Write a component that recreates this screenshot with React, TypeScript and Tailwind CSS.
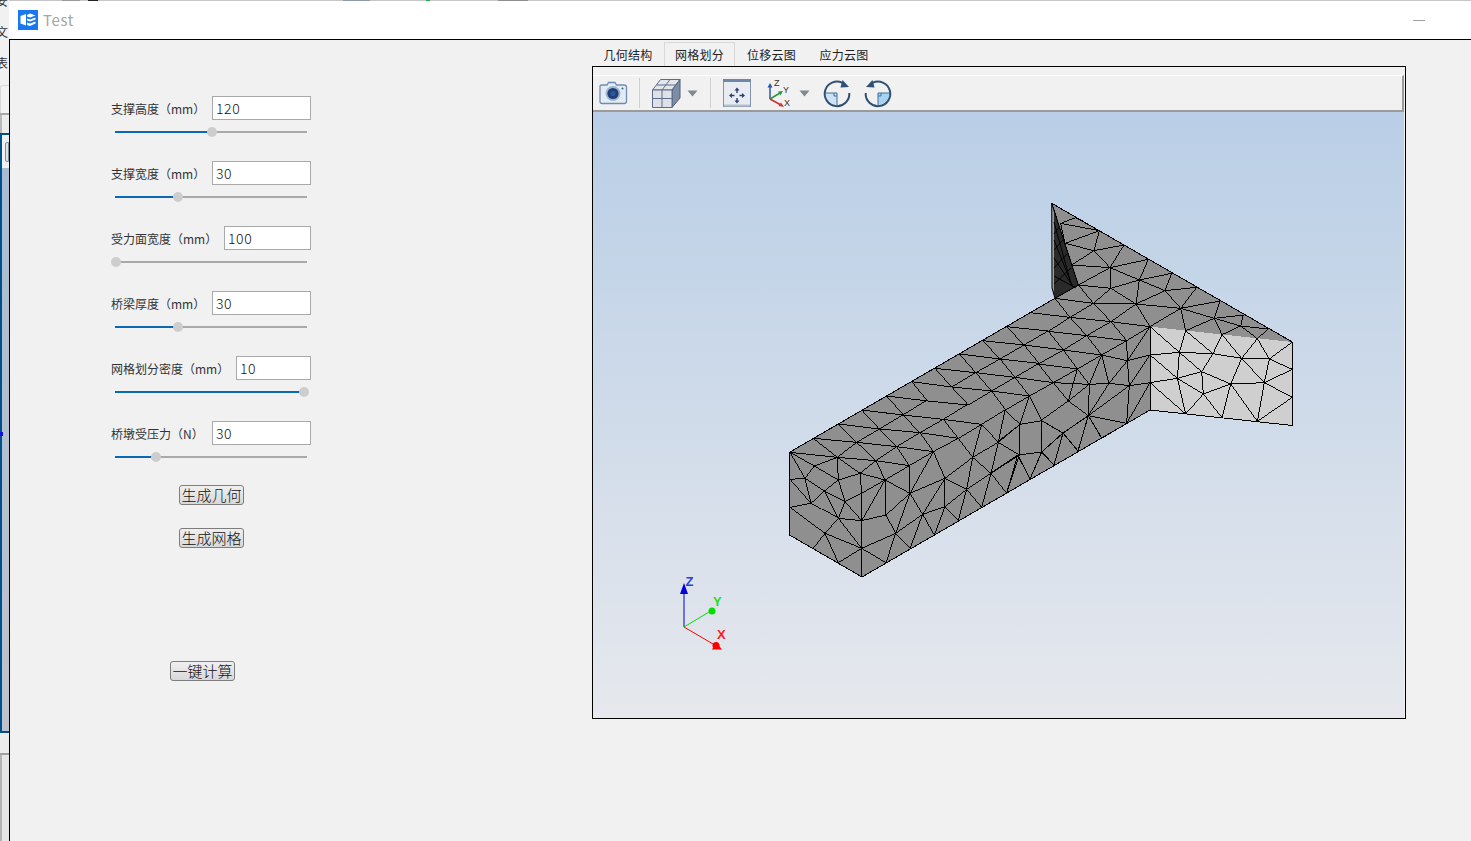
import React from "react";

const FONT = '"Noto Sans CJK SC","Noto Sans",sans-serif';

const toD = (s: string) =>
  s
    .split("|")
    .map((p) => p.trim())
    .filter(Boolean)
    .map((p) => "M" + p.replace(/\s+/g, "L"))
    .join("");

const params = [
  { label: "支撑高度（mm）", value: "120", inputW: "w-[99px]", pos: 97 },
  { label: "支撑宽度（mm）", value: "30", inputW: "w-[99px]", pos: 63 },
  { label: "受力面宽度（mm）", value: "100", inputW: "w-[87px]", pos: 1 },
  { label: "桥梁厚度（mm）", value: "30", inputW: "w-[99px]", pos: 63 },
  { label: "网格划分密度（mm）", value: "10", inputW: "w-[75px]", pos: 189 },
  { label: "桥墩受压力（N）", value: "30", inputW: "w-[99px]", pos: 41 },
];

function Slider({ pos }: { pos: number }) {
  return (
    <div className="relative mt-[7px] ml-[4px] flex h-[10px] w-[192px] items-center">
      <div className="h-[2px] w-full bg-[#a9a9a9]" />
      <div className="absolute left-0 top-[4px] h-[2px] bg-[#0b68b3]" style={{ width: pos }} />
      <div
        className="absolute top-0 h-[10px] w-[10px] rounded-full bg-[#cdcdcd]"
        style={{ left: pos - 5 }}
      />
    </div>
  );
}

function Param({ label, value, inputW, pos }: (typeof params)[number]) {
  return (
    <div className="mb-[24px] w-[200px]">
      <div className="flex h-[24px] items-center justify-between">
        <span className="whitespace-nowrap pt-[2px] text-[12px] text-[#333333]">{label}</span>
        <input
          readOnly
          value={value}
          className={`${inputW} h-[24px] border border-[#a9a9a9] bg-white pl-[3px] text-[14px] font-light tracking-[0.6px] text-[#111111] outline-none`}
        />
      </div>
      <Slider pos={pos} />
    </div>
  );
}

function OldButton({ children, className }: { children: string; className: string }) {
  return (
    <button
      className={`${className} flex h-[20px] w-[65px] items-center justify-center whitespace-nowrap rounded-[3px] border border-[#7d7d7d] bg-gradient-to-b from-[#f0f0f0] to-[#d8d8d8] pb-[2px] text-[15px] font-light leading-none text-[#111111]`}
    >
      {children}
    </button>
  );
}

function Camera() {
  return (
    <svg width="30" height="30" viewBox="0 0 30 30" className="ml-[5px] shrink-0">
      <path d="M2 8.5Q2 7 4 7H9L10.5 4.5H17L18.5 7H26Q28.5 7 28.5 9V23.5Q28.5 25.5 26 25.5H4Q2 25.5 2 23.5Z" fill="#e3ebf5" stroke="#6f8db0" strokeWidth="1.3" />
      <circle cx="15" cy="15.5" r="7.5" fill="#9db6d2" />
      <circle cx="15" cy="15.5" r="5.6" fill="#1f3f78" />
      <circle cx="15" cy="15.5" r="2.6" fill="#2f5796" />
      <circle cx="24.5" cy="10.5" r="1" fill="#3c5f8c" />
    </svg>
  );
}

function Cube() {
  return (
    <svg width="30" height="30" viewBox="0 0 30 30" className="ml-[11px] shrink-0">
      <path d="M1.5 12L9.5 1.5H29L21 12Z" fill="#e2e5ea" stroke="#5d6d88" />
      <path d="M21 12L29 1.5V20L21 29.5Z" fill="#7e8ca6" stroke="#4f5f7a" />
      <path d="M1.5 12H21V29.5H1.5Z" fill="#dee2e8" stroke="#5d6d88" />
      <path d="M11 12V29.5M1.5 20.5H21M5.5 7H25M11 12L19 1.5" fill="none" stroke="#5d6d88" />
    </svg>
  );
}

function Caret({ className }: { className: string }) {
  return (
    <svg width="11" height="7" viewBox="0 0 11 7" className={`${className} shrink-0`}>
      <path d="M0.5 0.5H10.5L5.5 6.5Z" fill="#808890" />
    </svg>
  );
}

function FitIcon() {
  return (
    <svg width="30" height="30" viewBox="0 0 30 30" className="ml-[11px] shrink-0">
      <rect x="1.5" y="1.5" width="27" height="27" fill="#e8ecf2" stroke="#8395ae" />
      <rect x="1" y="1" width="28" height="3" fill="#7088a8" />
      <rect x="2" y="26.5" width="26" height="2" fill="#b4bfcd" />
      <path
        d="M15 9.5L17.5 12.5H15.7V15H14.3V12.5H12.5Z M15 25.5L12.5 22.5H14.3V20H15.7V22.5H17.5Z M7 17.5L10 15V16.8H12.5V18.2H10V20Z M23 17.5L20 20V18.2H17.5V16.8H20V15Z"
        fill="#27406e"
      />
    </svg>
  );
}

function AxesIcon() {
  return (
    <svg width="30" height="30" viewBox="0 0 30 30" className="ml-[13px] shrink-0">
      <path d="M5 21V8" stroke="#2459a8" strokeWidth="1.5" />
      <path d="M5 5L2.5 9.5H7.5Z" fill="#2459a8" />
      <path d="M5 21L15 15" stroke="#2a9640" strokeWidth="1.5" />
      <path d="M18 13L13 13.5L15.5 17.5Z" fill="#2a9640" />
      <path d="M5 21L16 27" stroke="#cc2f2f" strokeWidth="1.5" />
      <path d="M19 29L16 24.5L13.5 28Z" fill="#dd3333" />
      <text x="9" y="8" fontSize="9" fill="#333333" fontFamily="Liberation Sans">Z</text>
      <text x="18" y="15" fontSize="9" fill="#333333" fontFamily="Liberation Sans">Y</text>
      <text x="19" y="28" fontSize="9" fill="#333333" fontFamily="Liberation Sans">X</text>
    </svg>
  );
}

function RotateIcon({ flip, fill, className }: { flip?: boolean; fill: string; className: string }) {
  return (
    <svg width="30" height="30" viewBox="0 0 30 30" className={`${className} shrink-0`}>
      <g transform={flip ? "translate(30 0) scale(-1 1)" : undefined}>
        <path d="M15 15H3.2A11.8 11.8 0 0 0 15 26.8Z" fill={fill} />
        <path d="M20.5 4.8A12.3 12.3 0 1 0 27.3 15" fill="none" stroke="#2f4f73" strokeWidth="2" />
        <path d="M27 9L18.5 9.5L20.5 2Z" fill="#2f4f73" />
        <path d="M3 15H15V27M12 15V18H15" fill="none" stroke="#3f6f9f" strokeWidth="1" />
      </g>
    </svg>
  );
}

/* mesh edges are stored in the pixel units of the source crops */
const Z4 = toD(`
30,157 172,172 288,182 388,197|100,115 230,127 350,140 460,155|175,72 298,87 420,98 535,115|245,30 368,45 490,58 605,73|
100,115 172,172|175,72 230,127 288,182|245,30 298,87 350,140 388,197|368,45 420,98 460,155|490,58 535,115|
172,172 230,127 298,87 368,45 442,0|288,182 350,140 420,98 490,58 560,15|388,197 460,155 535,115 605,73 675,30|
30,157 103,198 172,172|30,157 75,235|103,198 75,235 30,238|103,198 175,240 172,172|75,235 133,273|75,235 93,310 30,238|175,240 133,273|175,240 240,220 315,240|175,240 195,305|
133,273 195,305|133,273 175,355|133,273 93,310 30,322|93,310 175,355|30,322 135,400|175,355 135,400|175,355 245,362|175,355 195,305 245,362|195,305 245,280|245,280 245,362|240,220 245,280 315,240|315,240 245,362|
245,362 245,445|175,355 245,445|135,400 245,445|135,400 100,445|135,400 175,488|245,445 175,488|245,445 245,528|245,445 318,488|245,445 347,400|347,400 318,488|347,400 390,445|
245,362 318,345|315,240 318,345|318,345 390,280|318,345 347,400|390,280 428,343|390,280 347,400|390,280 495,235|388,197 390,280|315,240 390,280|315,240 388,197|240,220 288,182|172,172 240,220|288,182 315,240|
390,280 460,155 495,235|495,235 495,320|495,320 428,343 495,235|428,343 463,405|428,343 347,400|428,343 390,445|495,320 535,360|495,320 560,268|495,235 560,268|495,235 578,172|
560,268 535,360|560,268 578,172|560,268 605,322|605,322 633,220|633,220 578,172|633,220 680,280|633,220 655,127|578,172 535,115|578,172 605,73|578,172 655,127|655,127 605,73|655,127 675,30|655,127 720,73|675,30 720,73|655,127 718,165|720,73 718,165|718,165 633,220|718,165 680,280|560,268 633,220|495,320 463,405
`);

/* only the edges that lie above and to the right of the first crop */
const Z8 = toD(`
5,270 130,285|80,228 203,243|155,185 275,201|225,145 347,158|298,102 420,117|368,62 492,75|440,20 564,33|
80,228 130,285|155,185 203,243|225,145 275,201|298,102 347,158|368,62 420,117|440,20 492,75|
275,201 347,158 420,117 492,75 564,33|325,255 395,213 465,172 537,130|
275,201 325,255|347,158 395,213|420,117 465,172|492,75 537,130|
203,243 325,255|275,201 395,213|347,158 465,172|420,117 537,130|492,75 610,90|
395,213 437,270|465,172 508,228|395,213 508,228|465,172 580,188|
437,270 508,228 580,188|508,228 480,313|480,313 413,365|480,313 545,302
`);

const Z3 = toD(`
360,410 448,487 467,422 549,491 576,434 635,505 682,446 718,507 787,456|360,495 448,487 549,491 635,505 718,507 787,538|
360,495 442,565 448,487 515,545 549,491 635,505|515,545 602,582 635,505 703,578 718,507|703,578 787,538|602,582 703,578|360,578 442,565 515,545|
360,578 467,672|442,565 467,672|442,565 520,612 515,545|520,612 602,582|520,612 467,672|520,612 576,683|602,582 576,683|602,582 682,694|703,578 682,694|703,578 787,622|787,622 682,694|
92,100 137,83 208,122 92,100|92,100 105,160 208,122|208,122 192,182 105,160|282,165 192,182|192,182 240,233 125,225|192,182 125,225|105,160 125,225|240,233 282,165|240,233 355,208|240,233 328,270 355,208|328,270 425,250|328,270 405,302 425,250|405,302 500,292|
125,225 240,233|125,225 145,285 240,233|240,233 243,295 145,285|243,295 328,270|243,295 318,342|328,270 318,342 405,302|405,302 452,355 500,292|452,355 318,342|452,355 570,333|452,355 553,385 570,333|553,385 640,375|553,385 632,408 640,375|632,408 715,417|632,408 682,446 715,417|632,408 576,434|553,385 576,434|553,385 467,422|452,355 467,422|452,355 360,410|318,342 360,410|
75,325 190,340 318,342|145,285 190,340|243,295 190,340|190,340 243,395|318,342 243,395|75,325 120,382|190,340 120,382|120,382 243,395 360,410|120,382 0,368|
120,382 55,424|120,382 170,437|243,395 170,437|243,395 290,452|360,410 290,452|55,424 170,437 290,452|55,424 100,480|170,437 100,480|170,437 215,495|290,452 215,495|290,452 292,512|100,480 215,495 292,512 360,495|360,410 292,512|
100,480 142,537|25,522 142,537|215,495 142,537|215,495 178,583|215,495 237,580|292,512 237,580|292,512 298,587|298,587 360,495|298,587 360,578|237,580 298,587|178,583 237,580|142,537 178,583|142,537 70,578|142,537 115,633|70,578 115,633|25,522 70,578|70,578 178,583|178,583 115,633|178,583 175,677|237,580 175,677|298,587 175,677|298,587 290,700|175,677 290,700|360,578 290,700|115,633 175,677|115,633 35,690|175,677 215,745|290,700 215,745|0,620 35,690|
25,522 100,480
`);

const ZP = toD(`
1017.7,455 1030,479|1017.7,455 991,473|1017.7,455 1006.7,493|1041.7,420.7 1041.7,452|1041.7,452 1017.7,455|1041.7,452 1030,479|1041.7,452 1054,465|1063,433 1041.7,452|1063,433 1054,465|1063,433 1078,451|1041.7,420.7 1063,433|1088.3,415.7 1078,451|1088.3,415.7 1063,433|1088.3,415.7 1101.7,438
`);

const WEDGE = toD(`
1054,222 1070,280|1054,240 1072,285|1054,258 1074,288|1054,276 1076,288|1060,226 1054,234|1063,240 1054,250|1067,254 1054,268|1071,268 1054,284
`);

function Mesh() {
  return (
    <svg viewBox="593 112 811 606" className="block h-[606px] w-[811px]">
      <g shapeRendering="crispEdges">
        <polygon
          points="789.5,452.3 1055,298.3 1078.3,285 1051.7,203.3 1292.3,342 1150,326.7 1150,410 862,577 789.5,535"
          fill="#8f8f8f"
        />
        <polygon points="1150,326.7 1292.3,342 1292.3,425.5 1150,410" fill="#cfcfcf" />
        <g fill="none" stroke="#000000">
          <path transform="translate(780 400) scale(0.33333)" d={Z4} strokeWidth="3" />
          <path transform="translate(860 320) scale(0.33333)" d={Z8} strokeWidth="3" />
          <path transform="translate(1030 190) scale(0.33333)" d={Z3} strokeWidth="3" />
          <path d={ZP} strokeWidth="1" />
          <polygon
            points="789.5,452.3 1055,298.3 1078.3,285 1051.7,203.3 1292.3,342 1292.3,425.5 1150,410 862,577 789.5,535"
            strokeWidth="1"
          />
          <path d="M1150 326.7V410" strokeWidth="1" />
        </g>
      </g>
      <polygon points="1052,204 1078.3,285 1055,298.3 1052,288" fill="#2a2a2a" />
      <polygon points="1052,204 1054,212 1054,293 1052,288" fill="#9a9a9a" />
      <path d={WEDGE} fill="none" stroke="#000000" strokeWidth="1" />
      <path d="M1051.7 203.3L1052 288L1055 298.3L1078.3 285L1051.7 203.3" fill="none" stroke="#000000" strokeWidth="1" />
      <path d="M684 627V592" stroke="#0000e0" strokeWidth="1" />
      <path d="M684 583L680 594H688Z" fill="#0000e0" />
      <path d="M684 627L709 612" stroke="#00e000" strokeWidth="1" />
      <circle cx="712" cy="611" r="3.5" fill="#00e000" />
      <path d="M684 627L713 644" stroke="#ff0000" strokeWidth="1" />
      <circle cx="716" cy="645.5" r="3.5" fill="#ff0000" />
      <path d="M722 649.5L712 649.5L716 642Z" fill="#ff0000" />
      <text x="685.5" y="586" fontSize="13" fontWeight="700" fill="#2a3fe0" fontFamily="Liberation Sans">Z</text>
      <text x="713" y="606" fontSize="13" fontWeight="700" fill="#22e022" fontFamily="Liberation Sans">Y</text>
      <text x="717" y="639" fontSize="13" fontWeight="700" fill="#ff2020" fontFamily="Liberation Sans">X</text>
    </svg>
  );
}

function LeftStrip() {
  return (
    <div className="flex h-full w-[9px] shrink-0 flex-col overflow-hidden bg-[#f1f1f1]">
      <div className="flex h-[85px] flex-col gap-[13px] text-[12px] leading-[18px] text-[#333333]">
        <span className="-ml-[4px] -mt-[8px]">安</span>
        <span className="-ml-[4px]">文</span>
        <span className="-ml-[4px]">表</span>
      </div>
      <div className="h-[28px] rounded-tl-[3px] border-l border-t border-[#d8d8d8] bg-[#f3f3f3]" />
      <div className="h-[2px] bg-[#a8a8a8]" />
      <div className="h-[18px] border-l-2 border-[#b8b8b8] bg-[#ececec]" />
      <div className="relative flex h-[600px] flex-col border-y-2 border-l-2 border-[#00508f]">
        <div className="flex h-[33px] items-center bg-[#f1f1f1] pl-[3px]">
          <div className="h-[20px] w-[6px] rounded-l-[2px] border border-[#7e8ea0] bg-[#dfe3e8]" />
        </div>
        <div className="flex-1 bg-gradient-to-b from-[#a9bdd2] to-[#bdc3cc]" />
        <div className="absolute -left-[2px] top-[297px] h-[4px] w-[3px] bg-[#1010e0]" />
      </div>
      <div className="h-[20px] bg-[#ececec]" />
      <div className="h-[2px] bg-[#a0a0a0]" />
      <div className="flex-1 border-l-2 border-[#b4b4b4] bg-[#e6e6e6]" />
    </div>
  );
}

function TopBits() {
  return (
    <div className="flex h-[1px] shrink-0 bg-[#c6c6c6]">
      <div className="ml-[53px] w-[18px] bg-[#9a9a9a]" />
      <div className="ml-[8px] w-[10px] bg-[#222222]" />
      <div className="ml-[245px] w-[27px] bg-[#8f9aa8]" />
      <div className="ml-[56px] w-[4px] bg-[#2aa84a]" />
      <div className="ml-[68px] w-[30px] bg-[#8f8f8f]" />
    </div>
  );
}

export default function App() {
  return (
    <div className="flex h-[841px] w-[1471px] overflow-hidden bg-[#f1f1f1]" style={{ fontFamily: FONT }}>
      <LeftStrip />
      <div className="flex min-w-0 flex-1 flex-col">
        <TopBits />
        <div className="flex h-[38px] shrink-0 items-center bg-white pl-[9px]">
          <svg width="20" height="20" viewBox="0 0 20 20" className="shrink-0">
            <rect width="20" height="20" fill="#1a78ee" />
            <path d="M2.5 6L8 4V15.5L2.5 13.5Z M9 5L12 3.5L17.5 5.5L12 7.5L9 6.5Z M9 8.5L12 9.5L17.5 7.5V9.5L12 11.5L9 10.5Z M9 12.5L12 13.5L17.5 11.5V13.5L12 16L9 15Z" fill="#ffffff" />
          </svg>
          <span className="ml-[5px] text-[15px] tracking-[0.6px] text-[#a6a6a6]">Test</span>
          <div className="ml-auto mr-[46px] h-[1px] w-[12px] bg-[#a0a0a0]" />
        </div>
        <div className="flex flex-1 border-l border-t border-black">
          <div className="w-[582px] shrink-0 pl-[101px] pt-[56px]">
            {params.map((p) => (
              <Param key={p.label} {...p} />
            ))}
            <OldButton className="ml-[68px] -mt-[1px]">生成几何</OldButton>
            <OldButton className="ml-[68px] mt-[23px]">生成网格</OldButton>
            <OldButton className="ml-[59px] mt-[113px]">一键计算</OldButton>
          </div>
          <div className="pt-[2px]">
            <div className="flex h-[24px] text-[12px] tracking-[0.3px] text-[#222222]">
              <div className="flex w-[72px] items-center justify-center pt-[1px]">几何结构</div>
              <div className="flex w-[71px] items-center justify-center border border-b-0 border-[#d8d8d8] pt-[1px]">网格划分</div>
              <div className="flex w-[73px] items-center justify-center pt-[1px]">位移云图</div>
              <div className="flex w-[72px] items-center justify-center pt-[1px]">应力云图</div>
            </div>
            <div className="flex h-[653px] w-[814px] flex-col border border-black pr-[1px] pt-[8px]">
              <div className="flex h-[37px] shrink-0 items-center border-b-2 border-r-2 border-t border-b-[#9a9a9a] border-r-[#9a9a9a] border-t-white bg-[#f1f1f1]">
                <Camera />
                <div className="ml-[11px] h-[30px] w-[1px] bg-[#cfcfcf]" />
                <Cube />
                <Caret className="ml-[6px]" />
                <div className="ml-[12px] h-[30px] w-[1px] bg-[#cfcfcf]" />
                <FitIcon />
                <AxesIcon />
                <Caret className="ml-[4px]" />
                <RotateIcon fill="#cfe2f3" className="ml-[12px]" />
                <RotateIcon flip fill="#a8d2f2" className="ml-[11px]" />
              </div>
              <div className="flex-1 bg-gradient-to-b from-[#b9cee6] to-[#e6e8ed]">
                <Mesh />
              </div>
            </div>
          </div>
        </div>
      </div>
    </div>
  );
}
